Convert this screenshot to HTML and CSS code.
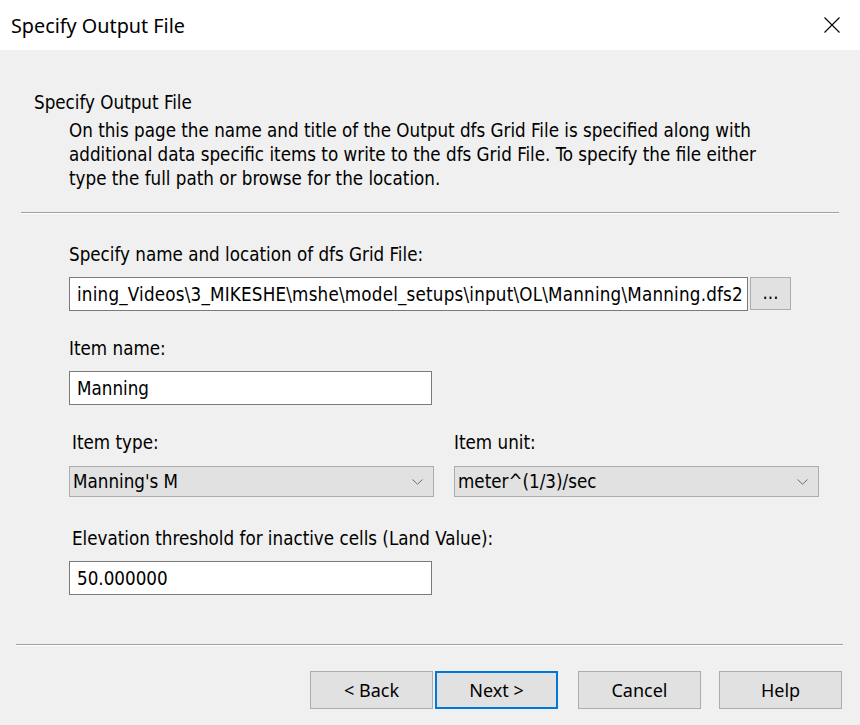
FILE: index.html
```html
<!DOCTYPE html>
<html lang="en">
<head>
    <meta charset="UTF-8">
    <title>Specify Output File</title>
    <link rel="stylesheet" href="styles.css">
</head>
<body>
    <div class="titlebar">
        <span class="title">Specify Output File</span>
        <svg class="close" width="16" height="16" viewBox="0 0 16 16">
            <path d="M0.5 0.5 L15.5 15.5 M15.5 0.5 L0.5 15.5" stroke="#000" stroke-width="1.1" fill="none"/>
        </svg>
    </div>

    <div class="content">
        <div class="header">
            <h1>Specify Output File</h1>
            <p>On this page the name and title of the Output dfs Grid File is specified along with<br>
            additional data specific items to write to the dfs Grid File. To specify the file either<br>
            type the full path or browse for the location.</p>
        </div>

        <div class="sep sep-top"></div>

        <div class="form">
            <label class="label">Specify name and location of dfs Grid File:</label>
            <div class="path-row">
                <div class="field path"><span>ining_Videos\3_MIKESHE\mshe\model_setups\input\OL\Manning\Manning.dfs2</span></div>
                <button class="browse">...</button>
            </div>

            <label class="label">Item name:</label>
            <input class="field short" type="text" value="Manning">

            <div class="pair">
                <div class="col">
                    <label class="label inset">Item type:</label>
                    <div class="combo">
                        <span>Manning's M</span>
                        <svg width="11" height="6" viewBox="0 0 11 6"><path d="M0.5 0.5 L5.5 5.2 L10.5 0.5" stroke="#6d6d6d" stroke-width="1" fill="none"/></svg>
                    </div>
                </div>
                <div class="col">
                    <label class="label">Item unit:</label>
                    <div class="combo">
                        <span>meter^(1/3)/sec</span>
                        <svg width="11" height="6" viewBox="0 0 11 6"><path d="M0.5 0.5 L5.5 5.2 L10.5 0.5" stroke="#6d6d6d" stroke-width="1" fill="none"/></svg>
                    </div>
                </div>
            </div>

            <label class="label inset">Elevation threshold for inactive cells (Land Value):</label>
            <input class="field short last" type="text" value="50.000000">
        </div>

        <div class="sep sep-bottom"></div>

        <div class="buttons">
            <button class="btn">&lt; Back</button>
            <button class="btn default">Next &gt;</button>
            <button class="btn gap">Cancel</button>
            <button class="btn gap">Help</button>
        </div>
    </div>
</body>
</html>
```

FILE: styles.css
```css
body {
    margin: 0;
    width: 860px;
    height: 725px;
    background: #f0f0f0;
    font-family: "DejaVu Sans Condensed", "DejaVu Sans", sans-serif;
    font-size: 18.65px;
    color: #000;
    overflow: hidden;
}
.titlebar {
    height: 50px;
    background: #fff;
    display: flex;
    align-items: center;
    justify-content: space-between;
    padding: 0 20px 0 11px;
}
.title {
    font-family: "Noto Sans", sans-serif;
    font-size: 19.8px;
}
.close { display: block; }

.header { padding: 41px 0 0 34px; }
.header h1 {
    margin: 0;
    font-size: inherit;
    font-weight: normal;
    line-height: 24px;
}
.header p {
    margin: 4px 0 0 35px;
    line-height: 24px;
}

.sep {
    height: 1px;
    background: #a0a0a0;
    border-bottom: 1px solid #fff;
}
.sep-top { margin: 21px 21px 0 21px; }
.sep-bottom { margin: 0 17px 0 16px; }

.form {
    padding: 29px 0 0 69px;
    display: flex;
    flex-direction: column;
    align-items: flex-start;
}
.form > * { flex-shrink: 0; }
.label {
    line-height: 24px;
    display: block;
}
.label.inset { padding-left: 3px; }

.field {
    height: 34px;
    box-sizing: border-box;
    border: 1px solid #7a7a7a;
    background: #fff;
    font: inherit;
    padding: 0 7px;
    margin: 10px 0 26px 0;
    outline: none;
}
.short { width: 363px; }
.field.last { margin-bottom: 49px; }

.path-row {
    display: flex;
    align-items: flex-start;
    gap: 2px;
    margin: 10px 0 26px 0;
}
.path {
    width: 679px;
    margin: 0;
    display: flex;
    align-items: center;
    overflow: hidden;
    white-space: nowrap;
    letter-spacing: 0.2px;
}
.browse {
    width: 41px;
    height: 33px;
    background: #e1e1e1;
    border: 1px solid #adadad;
    font: inherit;
    padding: 0 0 2px 0;
}

.pair {
    display: flex;
    gap: 20px;
}
.col { display: flex; flex-direction: column; }
.combo {
    width: 365px;
    height: 31px;
    box-sizing: border-box;
    background: #e1e1e1;
    border: 1px solid #adadad;
    margin: 11px 0 30px 0;
    display: flex;
    align-items: center;
    justify-content: space-between;
    padding: 0 10px 0 3px;
}

.buttons {
    display: flex;
    padding: 25px 0 0 310px;
}
.btn {
    width: 123px;
    height: 38px;
    background: #e1e1e1;
    border: 1px solid #adadad;
    font-family: "Noto Sans", sans-serif;
    font-size: 18px;
    color: #000;
    margin-right: 2px;
    padding: 0;
}
.btn.default { border: 2px solid #0078d7; }
.btn.gap { margin-left: 18px; margin-right: 0; }
```
